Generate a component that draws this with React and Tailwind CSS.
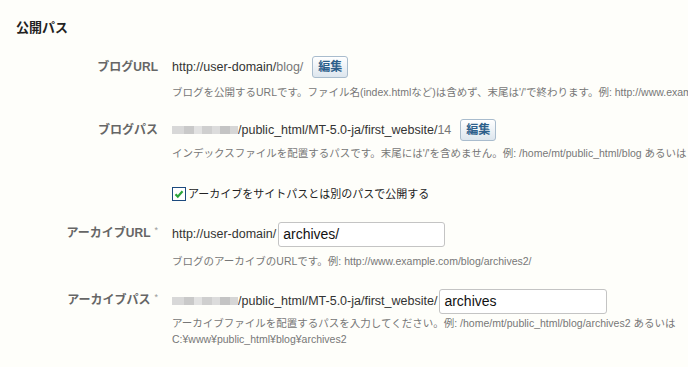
import React from 'react';

const jp = { fontFamily: '"Liberation Sans", "Noto Sans CJK JP", sans-serif' };

function EditButton() {
  return (
    <button className="ml-[9px] h-[22px] w-[36px] shrink-0 rounded-[3px] border border-[#a9bccd] bg-gradient-to-b from-[#ffffff] to-[#dde6ee] text-[12px] font-bold leading-none text-[#2d5f8b] shadow-[inset_0_1px_0_#fff]">
      編集
    </button>
  );
}

function Blurred() {
  return (
    <span className="inline-flex h-[10px] w-[66px] shrink-0 items-center blur-[0.6px]">
      <span className="h-[8px] w-[12px] bg-[#d8d8d8]" />
      <span className="h-[8px] w-[10px] bg-[#c9c9c9]" />
      <span className="h-[8px] w-[8px] bg-[#e2e2e2]" />
      <span className="h-[8px] w-[10px] bg-[#cfcfcf]" />
      <span className="h-[8px] w-[8px] bg-[#dcdcdc]" />
      <span className="h-[8px] w-[10px] bg-[#c4c4c4]" />
      <span className="h-[8px] w-[8px] bg-[#d6d6d6]" />
    </span>
  );
}

function Row({ label, required, children, className = '' }) {
  return (
    <div className={`flex ${className}`}>
      <div className="w-[158px] shrink-0 text-right">
        <div className="flex h-[24px] items-center justify-end text-[12px] font-bold text-[#666]">
          {label}
          {required && <span className="ml-[4px] -mt-[4px] text-[9px] font-normal text-[#999]">*</span>}
        </div>
      </div>
      <div className="ml-[14px] min-w-0 flex-1">{children}</div>
    </div>
  );
}

function Hint({ children, className = '' }) {
  return <div className={`whitespace-nowrap text-[10.5px] leading-[16px] text-[#777] ${className}`}>{children}</div>;
}

export default function App() {
  return (
    <div className="h-[367px] w-[688px] overflow-hidden bg-[#fefefa] text-[#333]" style={jp}>
      <h2 className="px-4 pt-[20px] text-[13px] font-bold leading-[16px] text-[#222]">公開パス</h2>

      <Row label="ブログURL" className="mt-[19px]">
        <div className="flex h-[24px] items-center whitespace-nowrap text-[12.5px]">
          <span>http://user-domain/</span>
          <span className="text-[#777]">blog/</span>
          <EditButton />
        </div>
        <Hint className="mt-[5px]">
          ブログを公開するURLです。ファイル名(index.htmlなど)は含めず、末尾は'/'で終わります。例: http://www.example.com/blog/
        </Hint>
      </Row>

      <Row label="ブログパス" className="mt-[18px]">
        <div className="flex h-[24px] items-center whitespace-nowrap text-[12.5px]">
          <Blurred />
          <span>/public_html/MT-5.0-ja/first_website/</span>
          <span className="text-[#777]">14</span>
          <EditButton />
        </div>
        <Hint className="mt-[3px]">
          インデックスファイルを配置するパスです。末尾には'/'を含めません。例: /home/mt/public_html/blog あるいは C:¥www¥public_html¥blog
        </Hint>
      </Row>

      <div className="ml-[172px] mt-[23px] flex h-[20px] items-center text-[11px] text-[#222]">
        <svg width="14" height="14" viewBox="0 0 14 14" className="mr-[2px] shrink-0">
          <rect x="0.5" y="0.5" width="13" height="13" fill="#fff" stroke="#1c4a7e" />
          <path d="M3.5 7.2 L5.8 9.6 L10.5 4.2" fill="none" stroke="#2aa43a" strokeWidth="2.2" />
        </svg>
        <span>アーカイブをサイトパスとは別のパスで公開する</span>
      </div>

      <Row label="アーカイブURL" required className="mt-[17px]">
        <div className="flex h-[26px] items-center whitespace-nowrap text-[12.5px]">
          <span>http://user-domain/</span>
          <input
            readOnly
            value="archives/"
            className="ml-[2px] h-[25px] w-[167px] rounded-[3px] border border-[#c4c4c4] bg-white px-[4px] text-[14px] text-[#111] outline-none"
          />
        </div>
        <Hint className="mt-[6px]">ブログのアーカイブのURLです。例: http://www.example.com/blog/archives2/</Hint>
      </Row>

      <Row label="アーカイブパス" required className="mt-[19px]">
        <div className="flex h-[26px] items-center whitespace-nowrap text-[12.5px]">
          <Blurred />
          <span>/public_html/MT-5.0-ja/first_website/</span>
          <input
            readOnly
            value="archives"
            className="ml-[2px] h-[25px] w-[168px] rounded-[3px] border border-[#c4c4c4] bg-white px-[4px] text-[14px] text-[#111] outline-none"
          />
        </div>
        <Hint className="mt-[1px]">
          アーカイブファイルを配置するパスを入力してください。例: /home/mt/public_html/blog/archives2 あるいは
          <br />
          C:¥www¥public_html¥blog¥archives2
        </Hint>
      </Row>
    </div>
  );
}
